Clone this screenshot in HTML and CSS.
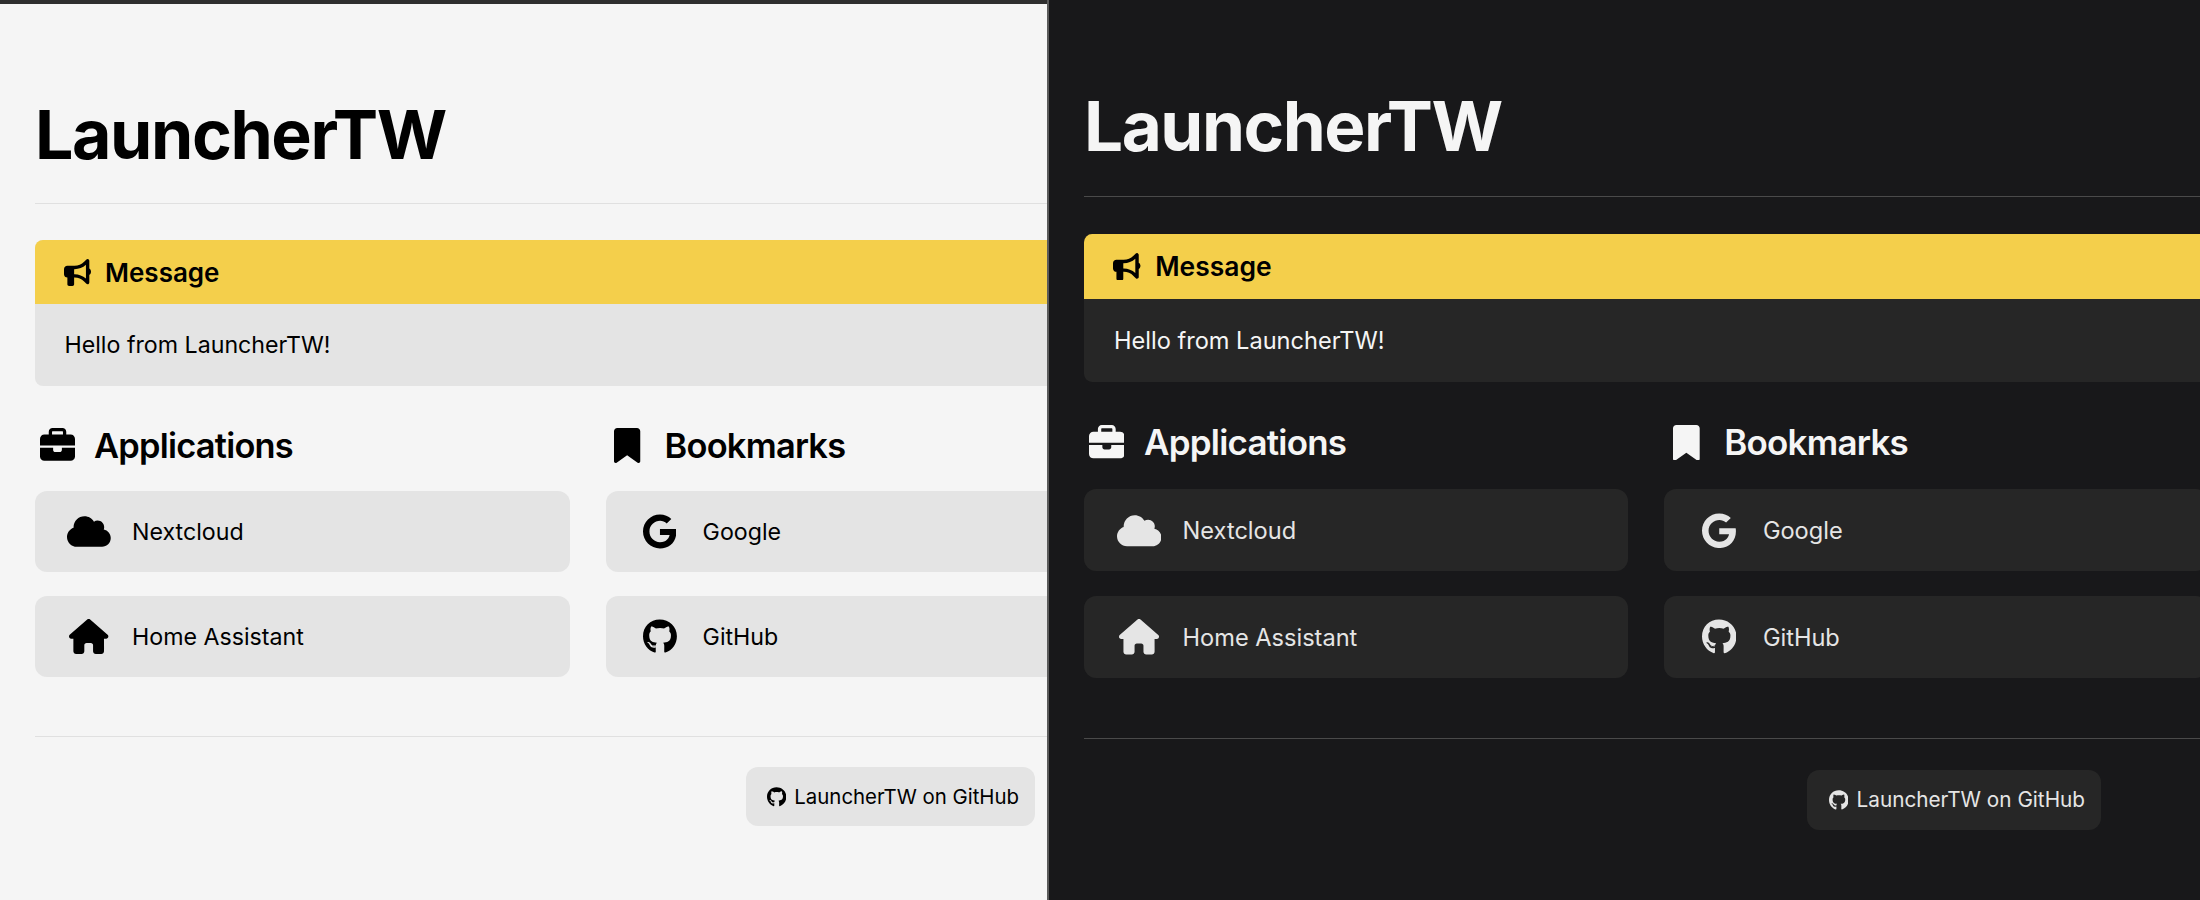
FILE: index.html
```html
<!DOCTYPE html>
<html lang="en">
<head>
    <meta charset="UTF-8">
    <meta name="viewport" content="width=device-width, initial-scale=1.0">
    <title>LauncherTW</title>
    <link rel="stylesheet" href="styles.css">
</head>
<body>

    <!-- Icon shapes, reused by both panels -->
    <svg class="icon-defs" aria-hidden="true">
        <defs>
            <path id="i-bullhorn" d="M480 32c0-12.9-7.8-24.6-19.8-29.6s-25.7-2.2-34.9 6.9L381.7 53c-48 48-113.1 75-181 75H192 160 64c-35.3 0-64 28.7-64 64v96c0 35.3 28.7 64 64 64l0 128c0 17.7 14.3 32 32 32h64c17.7 0 32-14.3 32-32V352l8.7 0c67.9 0 133 27 181 75l43.6 43.6c9.2 9.2 22.9 11.9 34.9 6.9s19.8-16.6 19.8-29.6V300.4c18.6-8.8 32-32.5 32-60.4s-13.4-51.6-32-60.4V32zm-64 76.7V240 371.3C357.2 317.8 280.5 288 200.7 288H192V192h8.7c79.8 0 156.5-29.8 215.3-83.3z"/>
            <path id="i-briefcase" d="M184 48H328c4.4 0 8 3.6 8 8V96H176V56c0-4.4 3.6-8 8-8zm-56 8V96H64C28.7 96 0 124.7 0 160v96H192 320 512V160c0-35.3-28.7-64-64-64H384V56c0-30.9-25.1-56-56-56H184c-30.9 0-56 25.1-56 56zM512 288H320v32c0 17.7-14.3 32-32 32H224c-17.7 0-32-14.3-32-32V288H0V416c0 35.3 28.7 64 64 64H448c35.3 0 64-28.7 64-64V288z"/>
            <path id="i-bookmark" d="M0 48V487.7C0 501.1 10.9 512 24.3 512c5 0 9.9-1.5 14-4.4L192 400 345.7 507.6c4.1 2.9 9 4.4 14 4.4c13.4 0 24.3-10.9 24.3-24.3V48c0-26.5-21.5-48-48-48H48C21.5 0 0 21.5 0 48z"/>
            <path id="i-cloud" d="M0 336c0 79.5 64.5 144 144 144H512c70.7 0 128-57.3 128-128c0-61.9-44-113.6-102.4-125.4c4.1-10.7 6.4-22.4 6.4-34.6c0-53-43-96-96-96c-19.7 0-38.1 6-53.3 16.2C367 64.2 315.3 32 256 32C167.6 32 96 103.6 96 192c0 2.7 .1 5.4 .2 8.1C40.2 219.8 0 273.2 0 336z"/>
            <path id="i-house" d="M575.8 255.5c0 18-15 32.1-32 32.1h-32l.7 160.2c0 2.7-.2 5.4-.5 8.1V472c0 22.1-17.9 40-40 40H456c-1.1 0-2.2 0-3.3-.1c-1.4 .1-2.8 .1-4.2 .1H416 392c-22.1 0-40-17.9-40-40V448 384c0-17.7-14.3-32-32-32H256c-17.7 0-32 14.3-32 32v64 24c0 22.1-17.9 40-40 40H160 128.1c-1.5 0-3-.1-4.5-.2c-1.2 .1-2.4 .2-3.6 .2H104c-22.1 0-40-17.9-40-40V360c0-.9 0-1.9 .1-2.8V287.6H32c-18 0-32-14-32-32.1c0-9 3-17 10-24L266.4 8c7-7 15-8 22-8s15 2 21 7L564.8 231.5c8 7 12 15 11 24z"/>
            <path id="i-google" d="M488 261.8C488 403.3 391.1 504 248 504 110.8 504 0 393.2 0 256S110.8 8 248 8c66.8 0 123 24.5 166.3 64.9l-67.5 64.9C258.5 52.6 94.3 116.6 94.3 256c0 86.5 69.1 156.6 153.7 156.6 98.2 0 135-70.4 140.8-106.9H248v-85.3h236.1c2.3 12.7 3.9 24.9 3.9 41.4z"/>
            <path id="i-github" d="M165.9 397.4c0 2-2.3 3.6-5.2 3.6-3.3 .3-5.6-1.3-5.6-3.6 0-2 2.3-3.6 5.2-3.6 3-.3 5.6 1.3 5.6 3.6zm-31.1-4.5c-.7 2 1.3 4.3 4.3 4.9 2.6 1 5.6 0 6.2-2s-1.3-4.3-4.3-5c-2.6-.7-5.5 .3-6.2 2.1zm44.2-1.7c-2.9 .7-4.9 2.6-4.6 4.9 .3 2 2.9 3.3 5.9 2.6 2.9-.7 4.9-2.6 4.6-4.6-.3-1.9-3-3.2-5.9-2.9zM244.8 8C106.1 8 0 113.3 0 252c0 110.9 69.8 205.8 169.5 239.2 12.8 2.3 17.3-5.6 17.3-12.1 0-6.2-.3-40.4-.3-61.4 0 0-70 15-84.7-29.8 0 0-11.4-29.1-27.8-36.6 0 0-22.9-15.7 1.6-15.4 0 0 24.9 2 38.6 25.8 21.9 38.6 58.6 27.5 72.9 20.9 2.3-16 8.8-27.1 16-33.7-55.9-6.2-112.3-14.3-112.3-110.5 0-27.5 7.6-41.3 23.6-58.9-2.6-6.5-11.1-33.3 2.6-67.9 20.9-6.5 69 27 69 27 20-5.6 41.5-8.5 62.8-8.5s42.8 2.9 62.8 8.5c0 0 48.1-33.6 69-27 13.7 34.7 5.2 61.4 2.6 67.9 16 17.7 25.8 31.5 25.8 58.9 0 96.5-58.9 104.2-114.8 110.5 9.2 7.9 17 22.9 17 46.4 0 33.7-.3 75.4-.3 83.6 0 6.5 4.6 14.4 17.3 12.1C428.2 457.8 496 362.9 496 252 496 113.3 383.5 8 244.8 8z"/>
        </defs>
    </svg>

    <main class="split">

        <!-- Light theme -->
        <section class="panel panel-light">
            <div class="top-band"></div>
            <div class="page">
                <h1>LauncherTW</h1>
                <hr>
                <div class="message">
                    <div class="message-head">
                        <svg class="icon icon-message" viewBox="0 0 512 512"><use href="#i-bullhorn"/></svg>
                        <span>Message</span>
                    </div>
                    <div class="message-body">Hello from LauncherTW!</div>
                </div>
                <div class="columns">
                    <div class="column">
                        <h2><span class="icon-box"><svg class="icon" viewBox="0 0 512 512"><use href="#i-briefcase"/></svg></span>Applications</h2>
                        <a class="card"><span class="icon-box"><svg class="icon" viewBox="0 0 640 512"><use href="#i-cloud"/></svg></span>Nextcloud</a>
                        <a class="card"><span class="icon-box"><svg class="icon" viewBox="0 0 576 512"><use href="#i-house"/></svg></span>Home Assistant</a>
                    </div>
                    <div class="column">
                        <h2><span class="icon-box"><svg class="icon" viewBox="0 0 384 512"><use href="#i-bookmark"/></svg></span>Bookmarks</h2>
                        <a class="card"><span class="icon-box"><svg class="icon" viewBox="0 0 488 512"><use href="#i-google"/></svg></span>Google</a>
                        <a class="card"><span class="icon-box"><svg class="icon" viewBox="0 0 496 512"><use href="#i-github"/></svg></span>GitHub</a>
                    </div>
                </div>
                <hr class="footer-rule">
                <footer class="footer">
                    <a class="repo-link"><svg class="icon icon-small" viewBox="0 0 496 512"><use href="#i-github"/></svg>LauncherTW on GitHub</a>
                </footer>
            </div>
        </section>

        <!-- Dark theme -->
        <section class="panel panel-dark">
            <div class="page">
                <h1>LauncherTW</h1>
                <hr>
                <div class="message">
                    <div class="message-head">
                        <svg class="icon icon-message" viewBox="0 0 512 512"><use href="#i-bullhorn"/></svg>
                        <span>Message</span>
                    </div>
                    <div class="message-body">Hello from LauncherTW!</div>
                </div>
                <div class="columns">
                    <div class="column">
                        <h2><span class="icon-box"><svg class="icon" viewBox="0 0 512 512"><use href="#i-briefcase"/></svg></span>Applications</h2>
                        <a class="card"><span class="icon-box"><svg class="icon" viewBox="0 0 640 512"><use href="#i-cloud"/></svg></span>Nextcloud</a>
                        <a class="card"><span class="icon-box"><svg class="icon" viewBox="0 0 576 512"><use href="#i-house"/></svg></span>Home Assistant</a>
                    </div>
                    <div class="column">
                        <h2><span class="icon-box"><svg class="icon" viewBox="0 0 384 512"><use href="#i-bookmark"/></svg></span>Bookmarks</h2>
                        <a class="card"><span class="icon-box"><svg class="icon" viewBox="0 0 488 512"><use href="#i-google"/></svg></span>Google</a>
                        <a class="card"><span class="icon-box"><svg class="icon" viewBox="0 0 496 512"><use href="#i-github"/></svg></span>GitHub</a>
                    </div>
                </div>
                <hr class="footer-rule">
                <footer class="footer">
                    <a class="repo-link"><svg class="icon icon-small" viewBox="0 0 496 512"><use href="#i-github"/></svg>LauncherTW on GitHub</a>
                </footer>
            </div>
        </section>

    </main>

</body>
</html>
```

FILE: styles.css
```css
body {
    margin: 0;
    height: 900px;
    overflow: hidden;
    font-family: Inter, "Liberation Sans", sans-serif;
}

.icon-defs {
    display: none;
}

.split {
    display: flex;
    height: 900px;
}

.panel {
    overflow: hidden;
    height: 900px;
}

.panel-light {
    width: 1047px;
    flex: none;
    background-color: #f5f5f5;
    color: #000;
    border-right: 2px solid #5a5a5a;
    --rule: #e0e0e0;
    --surface: #e4e4e4;
    --soft-text: #000;
}

.panel-dark {
    flex: 1;
    background-color: #18181a;
    color: #f5f5f5;
    --rule: #4a4a4a;
    --surface: #262626;
    --soft-text: #e5e5e5;
}

/* the dark half of the picture was captured very slightly larger */
.panel-dark .page {
    zoom: 1.017;
    padding-top: 87px;
    padding-left: 34.4px;
}

.top-band {
    height: 4px;
    background-color: #2e2e2e;
}

.page {
    width: 1781px;
    box-sizing: border-box;
    padding: 93px 35px 0;
}

h1 {
    margin: 0 0 31px;
    font-size: 68px;
    line-height: 75px;
    font-weight: 700;
    letter-spacing: -0.021em;
}

hr {
    margin: 0;
    border: none;
    border-top: 1px solid var(--rule);
}

.icon {
    display: block;
    height: 35px;
    fill: currentColor;
}

.icon-box {
    display: flex;
    justify-content: center;
    flex: none;
    width: 44px;
}

/* Message box */
.message {
    margin-top: 36px;
    border-radius: 8px;
    overflow: hidden;
    background-color: var(--surface);
}

.message-head {
    display: flex;
    align-items: center;
    gap: 14px;
    height: 64px;
    padding-left: 29px;
    background-color: #f4cf4b;
    color: #000;
    font-size: 26px;
    font-weight: 600;
}

.icon-message {
    height: 27px;
}

.message-body {
    display: flex;
    align-items: center;
    height: 82px;
    padding-left: 29.5px;
    font-size: 23.2px;
}

/* App and bookmark columns */
.columns {
    display: grid;
    grid-template-columns: 535px 535px;
    column-gap: 35.6px;
    margin-top: 39px;
}

.column {
    display: flex;
    flex-direction: column;
    gap: 24px;
}

h2 {
    display: flex;
    align-items: center;
    gap: 15px;
    height: 40px;
    margin: 0 0 2px;
    font-size: 34.4px;
    font-weight: 600;
    letter-spacing: -0.022em;
}

.card {
    display: flex;
    align-items: center;
    gap: 21px;
    height: 81px;
    padding-left: 32px;
    border-radius: 12px;
    background-color: var(--surface);
    color: var(--soft-text);
    font-size: 23.2px;
}

.footer-rule {
    margin-top: 59px;
}

.footer {
    display: flex;
    justify-content: center;
    margin-top: 30px;
}

.repo-link {
    display: flex;
    align-items: center;
    gap: 8px;
    height: 59px;
    padding: 0 16px 0 21px;
    border-radius: 12px;
    background-color: var(--surface);
    color: var(--soft-text);
    font-size: 20.4px;
}

.icon-small {
    height: 20px;
}
```
